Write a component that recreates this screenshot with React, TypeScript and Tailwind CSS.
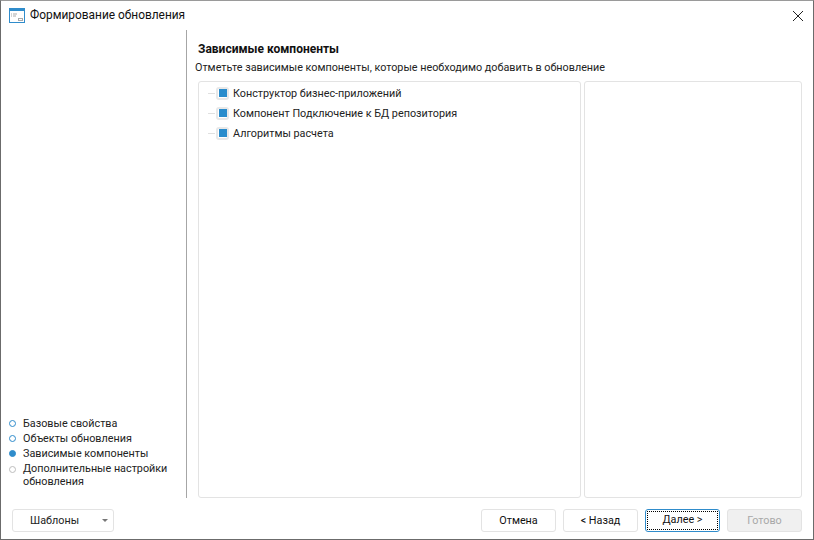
const font = { fontFamily: 'Roboto, sans-serif' };

function Btn({ children, cls = "" }: { children: React.ReactNode; cls?: string }) {
  return (
    <div className={`w-[75px] h-[23px] pt-[2px] rounded-[3px] border border-[#e3e3e3] bg-white flex items-center justify-center text-[10.8px] text-[#111] ${cls}`}>
      {children}
    </div>
  );
}

function Step({ label, kind, cls = "leading-[15px]" }: { label: React.ReactNode; kind: "done" | "active" | "todo"; cls?: string }) {
  const dot =
    kind === "done"
      ? "border-[#2f8ccb] bg-white"
      : kind === "active"
      ? "border-[#2f8ccb] bg-[#2f8ccb]"
      : "border-[#bdbdbd] bg-white";
  return (
    <div className={`flex items-start gap-[7px] text-[10.8px] text-[#222] ${cls}`}>
      <span className={`mt-[4px] w-[7px] h-[7px] rounded-full border-[1.5px] shrink-0 ${dot}`} />
      <span className="whitespace-nowrap">{label}</span>
    </div>
  );
}

function Item({ label }: { label: string }) {
  return (
    <div className="h-[20px] flex items-center">
      <span className="w-[7px] h-px bg-[#e0e0e0] mr-px" />
      <span className="w-[13px] h-[13px] border-2 border-[#e8e8e8] rounded-[3px] flex items-center justify-center">
        <span className="w-[8px] h-[8px] shrink-0 bg-[#2a8ccc]" />
      </span>
      <span className="ml-[4px] pt-[2px] text-[10.8px] text-[#222]">{label}</span>
    </div>
  );
}

export default function App() {
  return (
    <div style={font} className="w-[814px] h-[540px] bg-white border border-[#6b6b6b] border-t-[#9a9a9a] flex flex-col overflow-hidden">
      <div className="h-[29px] flex items-center pl-[8px] pr-[9px] shrink-0">
        <svg width="16" height="16" viewBox="0 0 16 16" className="shrink-0">
          <rect x="0.5" y="0.5" width="15" height="14" fill="#fff" stroke="#2f8ccb" />
          <rect x="0" y="0" width="16" height="3" fill="#2f8ccb" />
          <path d="M2 6h1M4 6h4M2 8h1M4 8h3" stroke="#a9a9a9" />
          <rect x="9.5" y="10.5" width="4" height="2" fill="none" stroke="#a9a9a9" />
        </svg>
        <span className="ml-[5px] pt-px text-[11.9px] text-[#111] flex-1">Формирование обновления</span>
        <svg width="12" height="12" viewBox="0 0 12 12">
          <path d="M1 1l10 10M11 1L1 11" stroke="#222" strokeWidth="1" />
        </svg>
      </div>
      <div className="flex flex-1 min-h-0">
        <div className="w-[186px] shrink-0 border-r border-r-[#a6a6a6] flex flex-col justify-end pl-[8px] pb-[10px]">
          <Step kind="done" label="Базовые свойства" />
          <Step kind="done" label="Объекты обновления" />
          <Step kind="active" label="Зависимые компоненты" />
          <Step kind="todo" cls="leading-[13px] pt-px" label={<>Дополнительные настройки<br />обновления</>} />
        </div>
        <div className="flex-1 min-w-0 flex flex-col pl-[8px] pr-[11px] pt-[11px]">
          <div className="pl-[3px] text-[12px] font-bold text-[#111] leading-[16px]">Зависимые компоненты</div>
          <div className="mt-[3px] text-[10.8px] text-[#222] leading-[16px]">Отметьте зависимые компоненты, которые необходимо добавить в обновление</div>
          <div className="mt-[5px] ml-[3px] flex-1 flex gap-[3px] min-h-0">
            <div className="w-[383px] rounded-[3px] border border-[#e3e3e3] pl-[9px] pt-px">
              <Item label="Конструктор бизнес-приложений" />
              <Item label="Компонент Подключение к БД репозитория" />
              <Item label="Алгоритмы расчета" />
            </div>
            <div className="flex-1 rounded-[3px] border border-[#e3e3e3]" />
          </div>
        </div>
      </div>
      <div className="h-[41px] shrink-0 flex items-center pl-[11px] pr-[11px] pt-[3px]">
        <div className="w-[102px] h-[23px] rounded-[3px] border border-[#e3e3e3] flex items-center text-[10.8px] text-[#222]">
          <span className="ml-[17px] pt-[2px] flex-1">Шаблоны</span>
          <span className="mr-[5px] w-0 h-0 border-x-[3px] border-x-transparent border-t-[3px] border-t-[#777]" />
        </div>
        <div className="ml-auto flex gap-[7px]">
          <Btn>Отмена</Btn>
          <Btn>&lt; Назад</Btn>
          <div className="w-[75px] h-[23px] rounded-[3px] border border-[#2f8ccb] bg-white p-px">
            <div className="w-full h-full pt-px border border-dotted border-black flex items-center justify-center text-[10.8px] text-[#111]">Далее &gt;</div>
          </div>
          <Btn cls="!bg-[#f0f0f0] !text-[#a8a8a8]">Готово</Btn>
        </div>
      </div>
    </div>
  );
}
